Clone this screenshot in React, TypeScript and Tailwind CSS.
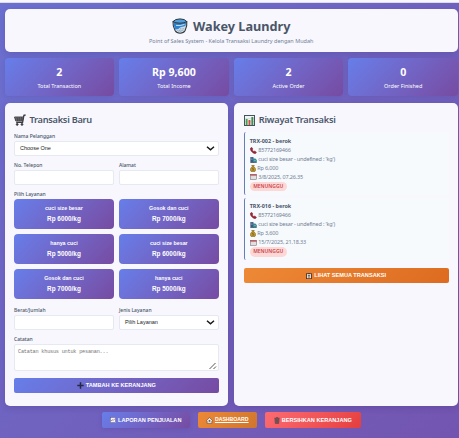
import React from "react";

const BLUE = "bg-linear-135 from-[#667eea] to-[#764ba2]";
const SANS = "font-['Noto_Sans','Open_Sans',sans-serif]";
const ARIAL = "font-['Liberation_Sans',Arial,sans-serif]";

function Bucket() {
  return (
    <svg className="h-4 w-4 shrink-0" viewBox="0 0 16 16">
      <path d="M1 3.6Q.6 8 3.2 12.8q1.4 2.4 4.9 2.4t4.9-2.4Q15.4 8 14.8 3.6Z" fill="#cddbe6" stroke="#30353c" strokeWidth="1.1" />
      <path d="M1.6 4.6Q1.6 8 3.4 11.6 6.6 11.4 8.4 9.2L13.4 8l.8-3.6Z" fill="#2d83cf" />
      <path d="M1 3.6Q3 .9 8 .9t6.8 2.7Q12.6 5.2 8 5.2T1 3.6Z" fill="#4f9fdc" stroke="#30353c" strokeWidth="1" />
      <path d="M4 7.4Q8 8.2 12.6 6.4" stroke="#c4e0f5" strokeWidth="1" fill="none" />
      <path d="M5.4 12.4h5.8M6.4 13.8h3.6M8 10.8h4" stroke="#8199ac" strokeWidth=".8" strokeDasharray="1 .6" fill="none" />
    </svg>
  );
}

function Cart() {
  return (
    <svg className="h-3 w-3 shrink-0" viewBox="0 0 12 12" fill="none" stroke="#3b3b40">
      <path d="M11.6 1 9.9 1.4 8.6 8.3H2.2" strokeWidth="1.3" />
      <path d="M.5 3h8.9L8.5 7H1.8Z" fill="#8b8b90" strokeWidth=".9" />
      <path d="M1 5h8M3 3l.6 4M5.2 3v4M7.4 3 7 7" strokeWidth=".8" />
      <circle cx="3.2" cy="10.4" r=".9" fill="#3b3b40" />
      <circle cx="8" cy="10.4" r=".9" fill="#3b3b40" />
    </svg>
  );
}

function Chart() {
  return (
    <svg className="h-[11px] w-[11px] shrink-0" viewBox="0 0 11 11">
      <rect x=".5" y=".5" width="10" height="10" fill="#eef5f4" stroke="#46545a" />
      <path d="M1 3.7h9M1 6.7h9" stroke="#b9c9cc" strokeWidth=".5" />
      <rect x="1.7" y="4" width="1.9" height="6" fill="#4c9b4f" />
      <rect x="4.5" y="5" width="1.9" height="5" fill="#d34c42" />
      <rect x="7.4" y="2" width="1.9" height="8" fill="#3d8b55" />
    </svg>
  );
}

function Phone() {
  return (
    <svg className="h-[7px] w-[7px] shrink-0" viewBox="0 0 7 7">
      <path d="M.4 1.2 1.7.3 3 2 2.2 2.9l1.7 1.7.9-.7 1.7 1.3-.9 1.4Q4 7.1 1.9 4.9T.4 1.2Z" fill="#a52435" stroke="#641d2a" strokeWidth=".4" />
    </svg>
  );
}

function Clothes() {
  return (
    <svg className="h-[7px] w-[7px] shrink-0" viewBox="0 0 7 7">
      <path d="M.4 1h3l.5 5.4H.4Z" fill="#3e5583" />
      <path d="M3.1 2.5h2.2L6.8 4v2.6H2.8Z" fill="#318c91" />
      <path d="M1.2 2h1.3M1.2 3.4h1.3M4 4.4h1.8" stroke="#a7c2d4" strokeWidth=".6" />
      <path d="M.4 6.5h6.2" stroke="#373d54" strokeWidth=".6" />
    </svg>
  );
}

function Money() {
  return (
    <svg className="h-[7px] w-[6px] shrink-0" viewBox="0 0 6 7">
      <path d="M1.7.3h2.6l-.5 1.3Q5.7 3 5.7 4.9T3 6.8.3 4.9 2.2 1.6Z" fill="#c59b27" stroke="#6d5424" strokeWidth=".5" />
      <path d="M3.8 3H2.4v1.1h1.3v1.2H2.2" fill="none" stroke="#69501b" strokeWidth=".5" />
    </svg>
  );
}

function Calendar() {
  return (
    <svg className="h-[6px] w-[7px] shrink-0" viewBox="0 0 7 6">
      <rect x=".3" y=".3" width="6.4" height="5.4" fill="#eee" stroke="#68575f" strokeWidth=".5" />
      <path d="M.4 1h6.2" stroke="#b13a43" strokeWidth="1.2" />
      <path d="M1.2 2.8h4.6M1.2 4.2h4.6" stroke="#a6a1a7" strokeWidth=".5" strokeDasharray=".7 .5" />
    </svg>
  );
}

function Plus() {
  return (
    <svg className="h-[7px] w-[7px] shrink-0" viewBox="0 0 7 7">
      <path d="M3.5.3v6.4M.3 3.5h6.4" stroke="#252944" strokeWidth="1.5" />
    </svg>
  );
}

function Report() {
  return (
    <svg className="h-[6px] w-[6px] shrink-0" viewBox="0 0 6 6">
      <rect x=".3" y=".3" width="5.4" height="5.4" fill="#f3f3fb" stroke="#4a4c70" strokeWidth=".5" />
      <path d="m1 4 1.3-1.2.9.7L5 1.6" fill="none" stroke="#a24c69" strokeWidth=".7" />
    </svg>
  );
}

function Clipboard() {
  return (
    <svg className="h-[6px] w-[6px] shrink-0" viewBox="0 0 6 6">
      <rect x=".5" y=".7" width="5" height="5" fill="#eee" stroke="#4f3427" strokeWidth=".9" />
      <path d="M2 .6h2M1.8 2.6h2.4M1.8 4h2.4" stroke="#44352f" strokeWidth=".8" />
    </svg>
  );
}

function Home() {
  return (
    <svg className="h-[7px] w-[7px] shrink-0" viewBox="0 0 7 7">
      <path d="M.4 3.6 3.5.5l3.1 3.1-.7.5v2.3H1.1V4.1Z" fill="#f1e4d4" stroke="#634733" strokeWidth=".6" />
      <rect x="2.7" y="3.1" width="1.6" height="1.6" fill="#4c5864" />
    </svg>
  );
}

function Trash() {
  return (
    <svg className="h-[7px] w-[6px] shrink-0" viewBox="0 0 6 7">
      <path d="M.9 1.8h4.2l-.5 4.8H1.4Z" fill="#8a6260" stroke="#4d4243" strokeWidth=".6" />
      <path d="M.3 1.2h5.4M2 .5h2M2.3 2.5v3.3M3.7 2.5v3.3" stroke="#4d4243" strokeWidth=".6" />
    </svg>
  );
}

function Label({ children }: { children: React.ReactNode }) {
  return <div className="h-[9px] text-[5px] leading-[9px] font-medium text-[#4a5568]">{children}</div>;
}

function Select({ value }: { value: string }) {
  return (
    <div className={`flex h-[15px] items-center justify-between rounded-[2px] border border-[#e5e9f1] bg-white pr-[3px] pl-[5px] text-[5.5px] text-[#222] ${ARIAL}`}>
      <span>{value}</span>
      <svg className="h-[5px] w-[9px]" viewBox="0 0 9 5">
        <path d="m1 .8 3.5 3L8 .8" fill="none" stroke="#171717" strokeWidth="1.5" />
      </svg>
    </div>
  );
}

function Input() {
  return <div className="h-[15px] rounded-[2px] border border-[#e5e9f1] bg-white" />;
}

const stats = [
  ["2", "Total Transaction"],
  ["Rp 9,600", "Total Income"],
  ["2", "Active Order"],
  ["0", "Order Finished"],
];

const services = [
  ["cuci size besar", "Rp 6000/kg"],
  ["Gosok dan cuci", "Rp 7000/kg"],
  ["hanya cuci", "Rp 5000/kg"],
  ["cuci size besar", "Rp 6000/kg"],
  ["Gosok dan cuci", "Rp 7000/kg"],
  ["hanya cuci", "Rp 5000/kg"],
];

function Transaction({ id, total, date }: { id: string; total: string; date: string }) {
  const row = "flex h-[9px] items-center gap-[1.5px]";
  return (
    <div className="h-[62.5px] rounded-[2px] border-l border-[#667eb8] bg-[#f7fafc] pt-[4.5px] pl-[5px] text-[5.5px] leading-[9px] text-[#718096]">
      <div className="h-[9px] text-[5.4px] font-bold text-[#4a5568]">{id} - berok</div>
      <div className={row}><Phone /><span className="tracking-[-0.2px]">85772169466</span></div>
      <div className={row}><Clothes /><span className="tracking-[-0.18px]">cuci size besar - undefined : 'kg')</span></div>
      <div className={row}><Money /><span className="tracking-[-0.15px]">{total}</span></div>
      <div className={row}><Calendar /><span className="tracking-[-0.16px]">{date}</span></div>
      <div className="flex h-[9.5px] w-[37px] items-center justify-center rounded-full bg-[#fed7d7] text-[5px] font-semibold text-[#c94444]">MENUNGGU</div>
    </div>
  );
}

export default function App() {
  const button = `flex items-center justify-center gap-[2px] rounded-[2px] text-[5.6px] font-bold text-white ${ARIAL}`;
  return (
    <div className={`h-[438px] w-[459px] overflow-hidden bg-white ${SANS}`}>
      <div className="h-[3px] border-b border-[#dcdce8] bg-[#f8f8fc]" />
      <div className="h-[435px] bg-linear-135 from-[#6b70d0] to-[#7355b0] pt-[6px] pr-px pl-[4.5px]">
        <header className="flex h-[43px] flex-col items-center rounded-[5px] bg-[#f7f7fd] pt-2 shadow-[0_2px_6px_rgba(50,30,110,0.2)]">
          <div className="flex h-[18px] items-center gap-[5px]">
            <Bucket />
            <h1 className="text-[12.7px] leading-[18px] font-bold text-[#4a5568]">Wakey Laundry</h1>
          </div>
          <p className="mt-px text-[5.5px] leading-[11px] whitespace-nowrap text-[#718096]">Point of Sales System - Kelola Transaksi Laundry dengan Mudah</p>
        </header>

        <section className="mt-[6px] grid h-[38px] grid-cols-4 gap-[5px]">
          {stats.map(([value, label]) => (
            <div key={label} className={`flex flex-col items-center rounded-[4px] pt-2 text-white shadow-[0_1px_5px_rgba(50,30,110,0.12)] ${BLUE}`}>
              <div className="text-[10.6px] leading-[13px] font-bold">{value}</div>
              <div className="mt-px text-[5.5px] leading-[12px]">{label}</div>
            </div>
          ))}
        </section>

        <main className="mt-[7px] grid h-[303px] grid-cols-2 gap-[6px]">
          <section className="rounded-[5px] bg-[#f7f7fd] px-[9.5px] pt-[10px] shadow-[0_2px_6px_rgba(50,30,110,0.2)]">
            <h2 className="flex h-[14px] items-center gap-[3.5px] text-[9.2px] font-semibold tracking-[-0.25px] text-[#4a5568]"><Cart />Transaksi Baru</h2>
            <div className="mt-[4.5px]"><Label>Nama Pelanggan</Label><Select value="Choose One" /></div>
            <div className="mt-[5.5px] grid grid-cols-2 gap-[5px]">
              <div><Label>No. Telepon</Label><Input /></div>
              <div><Label>Alamat</Label><Input /></div>
            </div>
            <div className="mt-[5px]"><Label>Pilih Layanan</Label></div>
            <div className="grid grid-cols-2 gap-[5px]">
              {services.map(([name, price], i) => (
                <div key={i} className={`h-[30px] rounded-[4px] pt-[4px] text-center font-bold text-white ${ARIAL} ${BLUE}`}>
                  <div className="text-[5.3px] leading-[11px]">{name}</div>
                  <div className="text-[6.4px] leading-[10px]">{price}</div>
                </div>
              ))}
            </div>
            <div className="mt-[7px] grid grid-cols-2 gap-[5px]">
              <div><Label>Berat/Jumlah</Label><Input /></div>
              <div><Label>Jenis Layanan</Label><Select value="Pilih Layanan" /></div>
            </div>
            <div className="mt-[5px]"><Label>Catatan</Label></div>
            <div className="flex h-[27px] items-start justify-between rounded-[2px] border border-[#e5e9f1] bg-white pt-[3px] pl-[3px] font-['Liberation_Mono','DejaVu_Sans_Mono',monospace] text-[5.2px] leading-[9px] tracking-[-0.2px] text-[#757575]">
              Catatan khusus untuk pesanan...
              <svg className="mr-px mt-[14px] h-[8px] w-[8px]" viewBox="0 0 8 8"><path d="m.5 7 6-6M4.5 7 7 4.5" stroke="#444" strokeWidth=".9" /></svg>
            </div>
            <div className={`mt-[6.5px] h-[15px] ${button} ${BLUE}`}><Plus />TAMBAH KE KERANJANG</div>
          </section>

          <section className="rounded-[5px] bg-[#f7f7fd] px-[9.5px] pt-[10px] shadow-[0_2px_6px_rgba(50,30,110,0.2)]">
            <h2 className="flex h-[14px] items-center gap-[4px] text-[9.2px] font-semibold tracking-[-0.2px] text-[#4a5568]"><Chart />Riwayat Transaksi</h2>
            <div className="mt-[5px] flex flex-col gap-[3px]">
              <Transaction id="TRX-002" total="Rp 6,000" date="3/8/2025, 07.26.35" />
              <Transaction id="TRX-016" total="Rp 3,600" date="15/7/2025, 21.18.33" />
            </div>
            <div className={`mt-[8px] h-[15px] bg-linear-135 from-[#ed8936] to-[#dd6b20] ${button}`}><Clipboard />LIHAT SEMUA TRANSAKSI</div>
          </section>
        </main>

        <footer className="mt-[6px] flex justify-center gap-[8px]">
          <div className={`h-[16px] w-[88px] shadow-[0_1px_4px_rgba(50,30,110,0.15)] ${button} ${BLUE}`}><Report />LAPORAN PENJUALAN</div>
          <div className={`h-[16px] w-[59px] bg-linear-135 from-[#ed8936] to-[#cf762d] ${button}`}><Home /><span className="text-[5.2px] underline">DASHBOARD</span></div>
          <div className={`h-[16px] w-[96px] bg-linear-135 from-[#fc6b72] to-[#e53e3e] ${button}`}><Trash />BERSIHKAN KERANJANG</div>
        </footer>
      </div>
    </div>
  );
}
